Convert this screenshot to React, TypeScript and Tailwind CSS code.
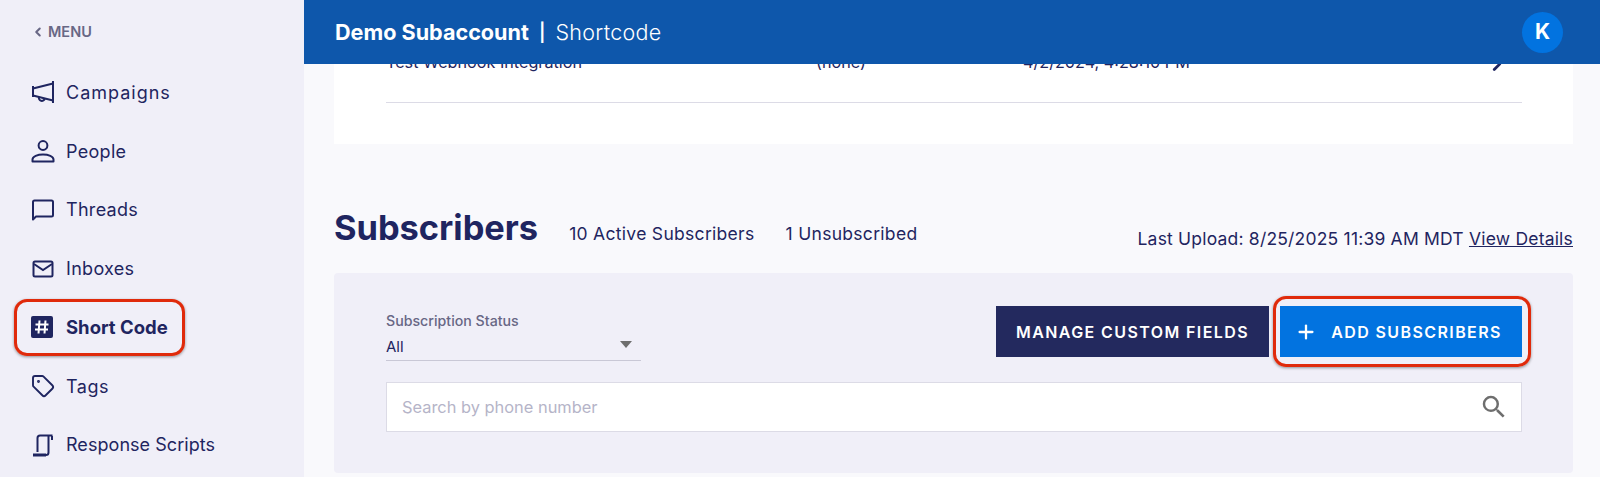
import { Plus, ChevronLeft, ChevronRight, Tag } from "lucide-react";

const navy = "#1f2560";

const MegaphoneIcon = () => (
  <svg width="24" height="24" viewBox="0 0 24 24" fill="none" stroke={navy} strokeWidth="2">
    <path d="M2 6v11" />
    <path d="M2 8.500L22 3.500M2 15.500L22 20.500" />
    <path d="M22 1v22" />
    <path d="M8 17a3 3 0 1 0 5.800 1.500" />
  </svg>
);

const PersonIcon = () => (
  <svg width="24" height="24" viewBox="0 0 24 24" fill="none" stroke={navy} strokeWidth="2">
    <circle cx="12" cy="6.500" r="4.400" />
    <path d="M1.500 22.500v-2c0-3 5-5 10.500-5s10.500 2 10.500 5v2z" strokeLinejoin="round" />
  </svg>
);

const ChatIcon = () => (
  <svg width="24" height="24" viewBox="0 0 24 24" fill="none" stroke={navy} strokeWidth="2">
    <path d="M2 21.500V4a1.500 1.500 0 0 1 1.500-1.500h17A1.500 1.500 0 0 1 22 4v13a1.500 1.500 0 0 1-1.500 1.500H5z" strokeLinejoin="round" />
  </svg>
);

const MailIcon = () => (
  <svg width="24" height="24" viewBox="0 0 24 24" fill="none" stroke={navy} strokeWidth="2">
    <rect x="2.500" y="4.500" width="19" height="15" rx="1.500" />
    <path d="M3 7l9 6 9-6" />
  </svg>
);

const HashIcon = () => (
  <svg width="22" height="22" viewBox="0 0 22 22">
    <rect width="22" height="22" rx="2" fill={navy} />
    <path d="M8.500 4.500l-1 13M14.500 4.500l-1 13M4.500 8.500h13M4 13.500h13" stroke="#fff" strokeWidth="2" fill="none" />
  </svg>
);

const ScrollIcon = () => (
  <svg width="24" height="24" viewBox="0 0 24 24" fill="none" stroke={navy} strokeWidth="2">
    <path d="M6.500 19V5a2.500 2.500 0 0 1 2.500-2.500h12.500" />
    <path d="M21 7V3M17.500 3v16.500a2.500 2.500 0 0 1-2.500 2.500" />
    <path d="M2 22h13" strokeWidth="3" />
  </svg>
);

const SearchIcon = () => (
  <svg width="30" height="30" viewBox="0 0 24 24" fill="#6e6e6e">
    <path d="M15.500 14h-.79l-.28-.27A6.470 6.470 0 0 0 16 9.500 6.500 6.500 0 1 0 9.500 16c1.610 0 3.090-.59 4.230-1.570l.27.28v.79l5 4.990L20.490 19l-4.990-5zm-6 0C7.010 14 5 11.990 5 9.500S7.010 5 9.500 5 14 7.010 14 9.500 11.990 14 9.500 14z" />
  </svg>
);

const navItems = [
  { label: "Campaigns", icon: <MegaphoneIcon />, textClass: "text-[18px] tracking-[1px]" },
  { label: "People", icon: <PersonIcon />, textClass: "text-[18px] tracking-[0.3px]" },
  { label: "Threads", icon: <ChatIcon />, textClass: "text-[18px] tracking-[0.3px]" },
  { label: "Inboxes", icon: <MailIcon />, textClass: "text-[18px] tracking-[0.3px]" },
  { label: "Short Code", icon: <HashIcon />, textClass: "text-[18.500px] font-bold", active: true },
  { label: "Tags", icon: <Tag size={24} strokeWidth={1.9} />, textClass: "text-[18px] tracking-[0.5px]" },
  { label: "Response Scripts", icon: <ScrollIcon />, textClass: "text-[18px] tracking-[0.05px]" },
];

const Sidebar = () => (
  <aside className="w-[304px] shrink-0 bg-[#f0eff8] pl-[31px]">
    <div className="flex h-[63px] items-center gap-[1px] text-[14.500px] font-semibold text-[#686785]">
      <ChevronLeft size={14} strokeWidth={3.5} />
      <span className="ml-[2px]">MENU</span>
    </div>
    <nav className="flex flex-col">
      {navItems.map((item) => (
        <div key={item.label} className="relative flex h-[58.750px] items-center text-[#1f2560]">
          <span className="flex w-[35px] justify-start">{item.icon}</span>
          <span className={item.textClass}>{item.label}</span>
          {item.active && (
            <div className="absolute left-[-17px] top-[1px] h-[57px] w-[171px] rounded-[13px] border-[3px] border-[#e02a0b] shadow-[0_1px_3px_rgba(0,0,0,0.4)]" />
          )}
        </div>
      ))}
    </nav>
  </aside>
);

const Header = () => (
  <header className="flex h-16 shrink-0 items-center bg-[#0e57ab] pl-[31px] pr-[37px] text-white">
    <span className="text-[21.600px] font-bold">Demo Subaccount</span>
    <span className="mx-[10px] text-[18px] font-semibold">|</span>
    <span className="text-[21.500px] font-light tracking-[0.3px]">Shortcode</span>
    <span className="ml-auto flex h-[41px] w-[41px] items-center justify-center rounded-full bg-[#0273e0] text-[21px] font-bold">K</span>
  </header>
);

const WebhookCard = () => (
  <div className="h-[80px] overflow-hidden bg-white pl-[52px] pr-[51px]">
    <div className="-mt-[11px] flex h-[50px] border-b border-[#dcdbe6] text-[16.200px] leading-[18px] text-[#1f2560]">
      <span className="w-[430px]">Test Webhook Integration</span>
      <span className="w-[207px]">(none)</span>
      <span>4/2/2024, 4:28:10 PM</span>
      <ChevronRight size={22} strokeWidth={3} className="ml-auto mr-[14px]" />
    </div>
  </div>
);

const SubscribersHeading = () => (
  <div className="mt-[64px] flex h-[65px] items-start text-[#1f2560]">
    <div className="flex items-baseline">
      <h2 className="text-[34.400px] font-bold leading-[40px]">Subscribers</h2>
      <span className="ml-[31px] text-[17.500px] tracking-[0.3px]">10 Active Subscribers</span>
      <span className="ml-[31px] text-[17.500px] tracking-[0.3px]">1 Unsubscribed</span>
    </div>
    <div className="ml-auto mt-[21px] text-[17.500px] leading-[20px] tracking-[0.2px]">
      Last Upload: 8/25/2025 11:39 AM MDT <span className="underline">View Details</span>
    </div>
  </div>
);

const Filters = () => (
  <div className="h-[200px] rounded-[4px] bg-[#f0eff8] pl-[52px] pr-[51px] pt-[33px]">
    <div className="flex h-[51px] items-start justify-between">
      <div className="w-[255px] border-b border-[#c9c8d6] pt-[6px]">
        <div className="text-[14.200px] font-medium leading-[17px] text-[#686785]">Subscription Status</div>
        <div className="relative mt-[7px] h-[24px] text-[15px] leading-[22px] text-[#1f2560]">
          All
          <span className="absolute right-[9px] top-[5px] h-0 w-0 border-x-[6px] border-t-[7px] border-x-transparent border-t-[#6e6e6e]" />
        </div>
      </div>
      <div className="flex gap-[11px]">
        <button className="h-[51px] w-[273px] bg-[#23295e] text-[16px] font-semibold tracking-[1.400px] text-white">MANAGE CUSTOM FIELDS</button>
        <div className="relative">
          <button className="flex h-[51px] w-[242px] items-center justify-center bg-[#0273e0] pr-[5px] text-[16px] font-semibold tracking-[1.400px] text-white">
            <Plus size={22} strokeWidth={2.500} className="mr-[14px]" />
            ADD SUBSCRIBERS
          </button>
          <div className="absolute -left-[7px] -right-[9px] -top-[10px] -bottom-[10px] rounded-[13px] border-[3px] border-[#e02a0b] shadow-[0_1px_3px_rgba(0,0,0,0.4)]" />
        </div>
      </div>
    </div>
    <div className="mt-[25px] flex h-[50px] items-center justify-between border border-[#dcdbe6] bg-white pl-[15px] pr-[12px]">
      <span className="text-[16.400px] text-[#b5b4c8]">Search by phone number</span>
      <SearchIcon />
    </div>
  </div>
);

export default function App() {
  return (
    <div className="flex h-[477px] w-[1600px] overflow-hidden bg-[#f9f9fc] font-['Inter','Liberation_Sans',sans-serif]">
      <Sidebar />
      <div className="flex min-w-0 flex-1 flex-col">
        <Header />
        <main className="pl-[30px] pr-[27px]">
          <WebhookCard />
          <SubscribersHeading />
          <Filters />
        </main>
      </div>
    </div>
  );
}
